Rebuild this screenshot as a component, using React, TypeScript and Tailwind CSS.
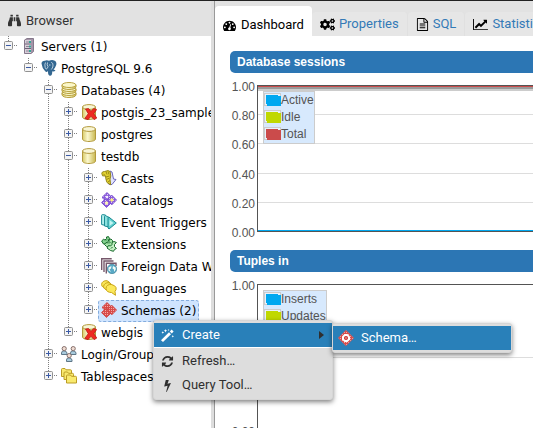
import type { ReactNode } from "react";
import { FaBinoculars, FaCogs } from "react-icons/fa";

const FA_PATHS = {
  tachometer:
    "M384 1152q0-53-37.5-90.5t-90.5-37.5-90.5 37.5-37.5 90.5 37.5 90.5 90.5 37.5 90.5-37.5 37.5-90.5zm192-448q0-53-37.5-90.5t-90.5-37.5-90.5 37.5-37.5 90.5 37.5 90.5 90.5 37.5 90.5-37.5 37.5-90.5zm428 481l101-382q6-26-7.5-48.5t-38.5-29.5-48 6.5-30 39.5l-101 382q-60 5-107 43.5t-63 98.5q-20 77 20 146t117 89 146-20 89-117q16-60-6-117t-72-91zm660-33q0-53-37.5-90.5t-90.5-37.5-90.5 37.5-37.5 90.5 37.5 90.5 90.5 37.5 90.5-37.5 37.5-90.5zm-640-640q0-53-37.5-90.5t-90.5-37.5-90.5 37.5-37.5 90.5 37.5 90.5 90.5 37.5 90.5-37.5 37.5-90.5zm448 192q0-53-37.5-90.5t-90.5-37.5-90.5 37.5-37.5 90.5 37.5 90.5 90.5 37.5 90.5-37.5 37.5-90.5zm320 448q0 261-141 483-19 29-54 29h-1402q-35 0-54-29-141-221-141-483 0-182 71-348t191-286 286-191 348-71 348 71 286 191 191 286 71 348z",
  file:
    "M1596 380q28 28 48 76t20 88v1152q0 40-28 68t-68 28h-1344q-40 0-68-28t-28-68v-1600q0-40 28-68t68-28h896q40 0 88 20t76 48zm-444-244v376h376q-10-29-22-41l-313-313q-12-12-41-22zm384 1528v-1024h-416q-40 0-68-28t-28-68v-416h-768v1536h1280zm-1024-864q0-14 9-23t23-9h704q14 0 23 9t9 23v64q0 14-9 23t-23 9h-704q-14 0-23-9t-9-23v-64zm736 224q14 0 23 9t9 23v64q0 14-9 23t-23 9h-704q-14 0-23-9t-9-23v-64q0-14 9-23t23-9h704zm0 256q14 0 23 9t9 23v64q0 14-9 23t-23 9h-704q-14 0-23-9t-9-23v-64q0-14 9-23t23-9h704z",
  chart:
    "M2048 1536v128h-2048v-1536h128v1408h1920zm-128-1248v435q0 21-19.5 29.5t-35.5-7.5l-121-121-633 633q-10 10-23 10t-23-10l-233-233-416 416-192-192 585-585q10-10 23-10t23 10l233 233 464-464-121-121q-16-16-7.5-35.5t29.5-19.5h435q14 0 23 9t9 23z",
  refresh:
    "M1639 1056q0 5-1 7-64 268-268 434.5t-478 166.5q-146 0-282.5-55t-243.5-157l-129 129q-19 19-45 19t-45-19-19-45v-448q0-26 19-45t45-19h448q26 0 45 19t19 45-19 45l-137 137q71 66 161 102t187 36q134 0 250-65t186-179q11-17 53-117 8-23 30-23h192q13 0 22.5 9.5t9.5 22.5zm25-800v448q0 26-19 45t-45 19h-448q-26 0-45-19t-19-45 19-45l138-138q-148-137-349-137-134 0-250 65t-186 179q-11 17-53 117-8 23-30 23h-199q-13 0-22.5-9.5t-9.5-22.5v-7q65-268 270-434.5t480-166.5q146 0 284 55.5t245 156.5l130-129q19-19 45-19t45 19 19 45z",
  bolt:
    "M1333 566q18 20 7 44l-540 1157q-13 25-42 25-4 0-14-2-17-5-25.5-19t-4.5-30l197-808-406 101q-4 1-12 1-18 0-31-11-18-15-13-39l201-825q4-16 18-27t32-11h328q19 0 32 12.5t13 29.5q0 8-5 18l-171 463 396-98q8-2 12-2 19 0 34 15z",
};

const Glyph = ({
  name,
  size = 13,
  box = 1792,
}: {
  name: keyof typeof FA_PATHS;
  size?: number;
  box?: number;
}) => (
  <svg
    width={Math.round((size * box) / 1792)}
    height={size}
    viewBox={`0 0 ${box} 1792`}
    fill="currentColor"
  >
    <path d={FA_PATHS[name]} />
  </svg>
);

const MagicWand = () => (
  <svg width="13" height="13" viewBox="0 0 13 13" fill="currentColor">
    <path d="M0 11.2 8 3.2 10 5.2 2 13Z" />
    <path d="M8.800 2.400 10.600.6 12.600 2.600 10.800 4.400Z" />
    <path d="M4.500 0 5 1.300 6.300 1.800 5 2.300 4.500 3.600 4 2.300 2.700 1.800 4 1.300ZM1.800 2.200l.4.9.9.4-.9.4-.4.9-.4-.9-.9-.4.9-.4ZM7.600 0l.3.7.7.3-.7.3-.3.7-.3-.7-.7-.3.7-.3ZM11.800 6l.4.9.8.4-.8.4-.4.9-.4-.9-.8-.4.8-.4Z" />
  </svg>
);

const Cylinder = () => (
  <>
    <path
      d="M1.500 3v10C1.500 14.500 4.500 15.500 8 15.500S14.500 14.500 14.500 13v-10Z"
      fill="url(#cyl)"
      stroke="#b39a3e"
    />
    <ellipse cx="8" cy="3" rx="6.500" ry="2.400" fill="#f8f5d4" stroke="#b39a3e" />
  </>
);

const Person = ({ x, y }: { x: number; y: number }) => (
  <g transform={`translate(${x} ${y})`} stroke="#5f7787">
    <path d="M.5 8.500V7Q.5 4.800 3 4.800T6 7v1.500Z" fill="#a9cbdd" />
    <circle cx="3.200" cy="2.600" r="2.100" fill="#f0dcd2" stroke="#86706c" />
  </g>
);

const ICONS: Record<string, ReactNode> = {
  servers: (
    <>
      <path d="M3.500 2 6 .5h6.500v13L10 15.500H3.500Z" fill="#a595a9" stroke="#85788b" />
      <path d="M4 2h6v13H4Z" fill="#d8d0da" />
      <path d="M4 6h6M4 10.500h6" stroke="#6f6177" />
      <path d="M5 4h3M5 8.500h3M5 13h3" stroke="#8d8193" />
      <path d="M8 3h2v2H8ZM8 7.500h2v2H8ZM8 12h2v2H8Z" fill="#35a596" />
    </>
  ),
  postgres: (
    <>
      <path
        d="M.5 3.500Q.8.600 3.800.7 6-.2 8 .8 11-.6 13.700.7 16 1.800 15.200 5 14.200 8 12.500 9.500L14.500 10.300Q13.300 12 11.200 11.300 11.400 15.800 9.200 15.800 6.800 15.800 7 11 5.500 12.800 4 11 1 8 .5 3.500Z"
        fill="#336791"
      />
      <path
        d="M4.500 2.500Q3.400 4.500 4.200 7.500 4.500 9.300 6 9M6.500 2.500Q5.600 5 7 6.500L6.300 8.500M10.200 2.300Q12.500 3 12 6 11.500 8.300 10.300 9.500M8 5h1.500"
        fill="none"
        stroke="#dce8f1"
        strokeWidth=".8"
      />
    </>
  ),
  databases: (
    <>
      {[11, 7, 3].map((y) => (
        <g key={y} stroke="#b9a241">
          <path d={`M1 ${y}v2Q2 ${y + 4.5} 8 ${y + 4.5}T15 ${y + 2}v-2Z`} fill="url(#cyl)" />
          <ellipse cx="8" cy={y} rx="7" ry="2.500" fill="#fbf7c8" />
        </g>
      ))}
    </>
  ),
  database: <Cylinder />,
  offline: (
    <>
      <Cylinder />
      <path
        d="M4.500 5 7.500 4.500 10 7.300 12.700 4.500 15.700 5.500 12.800 9.700 15.800 14 13.200 15.700 10 12.300 7 15.700 3.800 14.500 7.200 9.700Z"
        fill="#ee2a22"
        stroke="#b5120f"
        strokeWidth=".7"
      />
    </>
  ),
  casts: (
    <>
      <path d="M9 1 11 2 12.500 9 15 9.500 11 14.500 8 14.500Z" fill="#e2e4ff" stroke="#6a67bd" />
      <path
        d="M.8 3.200Q1 1.500 3.500 1.500L7 .6 9 1.500 9.800 6 9 9 9.600 14.800 6 12.500 5 9.500 4.500 6 1.500 5.800Z"
        fill="#e3d230"
        stroke="#94861a"
      />
      <path d="M2.500 3.800 4 5.500M5 1.500l1 3M7 1.500l1 3M5 7l3.500-1M5.500 9.500 8.500 8M7 12l2-1.500" stroke="#857813" strokeWidth=".8" />
    </>
  ),
  catalogs: (
    <>
      <g fill="url(#purplemesh)" stroke="#7546cf" strokeWidth=".9">
        <path d="M6 .6 11 5.400 6 10.200 1 5.400Z" />
        <path d="M5.500 5.800 10.500 10.600 5.500 15.400.5 10.600Z" />
        <path d="M10.800 3.200 15.500 8 10.800 12.800 6.200 8Z" />
      </g>
      <path d="M10.800 6 12.800 8 10.800 10 8.800 8Z" fill="#fbf27a" />
      <path d="M5.500 9 7.500 11 5.500 13 3.500 11Z" fill="#fff7b0" />
      <path d="M6 3.500 7.500 5 6 6.500 4.500 5Z" fill="#fff" />
    </>
  ),
  eventTriggers: (
    <g stroke="#1b8b93">
      <path d="M.6 1.500Q.6.6 1.600.6L4.500 1 4.500 11.500.6 10.500Z" fill="#b4efed" />
      <path d="M3.500 2.500Q3.500 1.600 4.500 1.600L9 4 8 13 3.500 12Z" fill="#8ae2df" />
      <path d="M7 4Q7 2.800 8 3.200L15.300 9 8 15 7 14Z" fill="#5fd0cf" />
      <path d="M8.500 6v6l4-3Z" fill="#c4f5f2" stroke="none" />
    </g>
  ),
  extensions: (
    <g fill="#84d28f" stroke="#17692b">
      <path d="M.6 5 2.500 3.300 4 4 5.500 2.500 5.500 1 7.500.6 8.500 2.500 7 5.500 4.500 8 2.500 8Z" />
      <path d="M3.500 8.500 5 6.500 6.500 7 8 5.500 8 3.500 10 3 11.500 4.500 12 8 8.500 11.500 5.500 10.500Z" fill="#a5e3a8" />
      <path d="M6 12 7.500 9.500 9.500 10 11 8.500 11 6.500 13 5.500 15.400 6.500 13.500 8.500 13.500 10.500 15.400 12.500 13.500 13.500 12.500 15.300 9.500 14.500Z" fill="#c2f0c2" />
      <path d="m5 4.500 1-1M8 7.500l1.500-1.500M10 12.500l1.500-1.500" />
    </g>
  ),
  foreign: (
    <>
      <path d="M.7 12V.7h10M3 14V3h9.500M5.300 15.500V5.300h9.700V8" fill="none" stroke="#76586b" strokeWidth="1.400" />
      <circle cx="11" cy="11" r="4.700" fill="#58a9c6" stroke="#3e8198" strokeWidth=".7" />
      <path d="M7.500 9.500 10.500 8l-.5 2.500L8.500 11.500 10 14 7.500 12.500ZM12 8l2.700 1.500v2L13 14v-2.500l-1.500-1Z" fill="#f4fbf6" />
    </>
  ),
  languages: (
    <g fill="#fbe85a" stroke="#c8a416">
      <path d="M6 .7C3 .4.600 2 .6 4.500S3 8 5 8l3 2V8Q10 6 9.500 4T6 .7Z" />
      <path d="M8 2.700C5 2.400 2.600 4 2.600 6.500S5 10 7 10l3 2V10Q12 8 11.500 6T8 2.700Z" />
      <path d="M10.500 4.500C7.500 4.200 5 5.500 5 8.500S8 12.500 10.500 12.500l4 2.800-.5-3.800Q15.700 9.500 15 7.500T10.500 4.500Z" />
    </g>
  ),
  schemas: (
    <g fill="url(#redmesh)" stroke="#cf4240" strokeWidth=".9">
      <path d="M6 .6 11 5.400 6 10.200 1 5.400Z" />
      <path d="M5.500 5.800 10.500 10.600 5.500 15.400.5 10.600Z" />
      <path d="M10.800 3.200 15.500 8 10.800 12.800 6.200 8Z" />
    </g>
  ),
  schema: (
    <>
      <path d="M8 .3 15.700 8 8 15.700.3 8Z" fill="url(#redmesh)" stroke="#e05a58" strokeWidth=".6" />
      <path d="M6.500 4h3L12 6.500v3L9.500 12h-3L4 9.500v-3Z" fill="#fff" />
      <circle cx="8" cy="8" r="1.500" fill="#e98886" stroke="#c83634" strokeWidth="1.100" />
    </>
  ),
  roles: (
    <>
      <Person x={0} y={0} />
      <Person x={9} y={0} />
      <Person x={5} y={7} />
    </>
  ),
  tablespaces: (
    <g fill="#f9ea6e" stroke="#bb9c25">
      <path d="M.5 8.500V1.500q0-1 1-1h2.500l1 1.300H9.500q1 0 1 1v5.700Z" />
      <path d="M3 11.500V5q0-1 1-1h2.500l1 1.300h4q1 0 1 1v5.200Z" />
      <path d="M5.500 15V8q0-1 1-1h3l1 1.300h4q1 0 1 1V15Z" />
    </g>
  ),
};

const NodeIcon = ({ name }: { name: string }) => (
  <svg width="16" height="16" viewBox="0 0 16 16" className="shrink-0">
    {ICONS[name]}
  </svg>
);

type TreeNode = {
  label: string;
  icon: string;
  level: number;
  open?: boolean;
  last?: boolean;
  selected?: boolean;
};

const TREE: TreeNode[] = [
  { label: "Servers (1)", icon: "servers", level: 0, open: true, last: true },
  { label: "PostgreSQL 9.6", icon: "postgres", level: 1, open: true, last: true },
  { label: "Databases (4)", icon: "databases", level: 2, open: true },
  { label: "postgis_23_sample", icon: "offline", level: 3 },
  { label: "postgres", icon: "database", level: 3 },
  { label: "testdb", icon: "database", level: 3, open: true },
  { label: "Casts", icon: "casts", level: 4 },
  { label: "Catalogs", icon: "catalogs", level: 4 },
  { label: "Event Triggers", icon: "eventTriggers", level: 4 },
  { label: "Extensions", icon: "extensions", level: 4 },
  { label: "Foreign Data W", icon: "foreign", level: 4 },
  { label: "Languages", icon: "languages", level: 4 },
  { label: "Schemas (2)", icon: "schemas", level: 4, last: true, selected: true },
  { label: "webgis", icon: "offline", level: 3, last: true },
  { label: "Login/Group", icon: "roles", level: 2 },
  { label: "Tablespaces", icon: "tablespaces", level: 2, last: true },
];

const DOTS = { stroke: "#808080", strokeDasharray: "1 1" };

// Servers and PostgreSQL have no siblings, so no line runs below them
const Guide = ({ line }: { line: boolean }) => (
  <svg width="20" height="22" className="shrink-0">
    {line && <line x1="8.500" y1="0" x2="8.500" y2="22" {...DOTS} />}
  </svg>
);

const Toggle = ({ node }: { node: TreeNode }) => (
  <button
    type="button"
    aria-label={`${node.open ? "Collapse" : "Expand"} ${node.label}`}
    className="h-[22px] w-[18px] shrink-0"
  >
    <svg width="18" height="22">
      <line x1="8.500" y1="0" x2="8.500" y2={node.last ? 10 : 22} {...DOTS} />
      <line x1="14" y1="9.500" x2="18" y2="9.500" {...DOTS} />
      <rect x="4.500" y="5.500" width="8" height="8" rx="1" fill="#f4f4f4" stroke="#919191" />
      <path d={node.open ? "M6 9.500h5" : "M6 9.500h5M8.500 7v5"} stroke="#3b5aa5" />
    </svg>
  </button>
);

const BrowserTree = () => (
  <ul
    role="tree"
    className="overflow-hidden bg-white font-['DejaVu_Sans',Verdana,sans-serif] text-[12px] leading-[18px] text-black"
  >
    {TREE.map((node) => (
      <li key={node.label} role="treeitem" aria-selected={!!node.selected} className="flex h-[22px]">
        {Array.from({ length: node.level }, (_, i) => (
          <Guide key={i} line={i === 2 ? true : i === 3} />
        ))}
        <Toggle node={node} />
        <span
          className={
            node.selected
              ? "flex items-start gap-1 rounded-[3px] border border-dashed border-[#84acdd] bg-[#cfe4fe] px-0.5 pt-px whitespace-nowrap"
              : "flex items-start gap-1 border border-transparent px-0.5 pt-px whitespace-nowrap"
          }
        >
          <NodeIcon name={node.icon} />
          {node.label}
        </span>
      </li>
    ))}
  </ul>
);

const TABS = [
  { label: "Properties", icon: <FaCogs size={15} /> },
  { label: "SQL", icon: <Glyph name="file" /> },
  { label: "Statistics", icon: <Glyph name="chart" box={2048} /> },
];

const TabBar = () => (
  <nav className="flex h-[35px] items-end overflow-hidden bg-[#e2e2e2] text-[13px]">
    <button
      type="button"
      className="flex h-[30px] shrink-0 items-center gap-[5px] rounded-t-[4px] bg-white px-2 pt-2 text-black"
    >
      <Glyph name="tachometer" />
      Dashboard
    </button>
    {TABS.map((tab) => (
      <button
        key={tab.label}
        type="button"
        className="flex h-6 shrink-0 items-center gap-1 rounded-t-[4px] border-r border-[#e0e0e0] bg-[#e6e6e6] px-2 text-[#337ab7]"
      >
        <span className="text-black">{tab.icon}</span>
        {tab.label}
      </button>
    ))}
  </nav>
);

type Series = { name: string; color: string };

const Legend = ({ series }: { series: Series[] }) => (
  <ul className="absolute top-[18px] left-[33px] border border-[#ccc] bg-[#d7e9fd] text-[12px] leading-[17px] text-[#545454]">
    {series.map(({ name, color }) => (
      <li key={name} className="flex items-center">
        <svg width="17" height="17" className="shrink-0">
          <rect x="0.500" y="1.500" width="16" height="12" fill="#e8f1fb" stroke="#ccc" />
          <path d="M2 3h12v1h3v10H3v-2H2Z" fill={color} />
        </svg>
        {name}
      </li>
    ))}
  </ul>
);

const Chart = ({
  title,
  ticks,
  series,
  sessions,
}: {
  title: string;
  ticks: string[];
  series: Series[];
  sessions?: boolean;
}) => (
  <section>
    <h2 className="h-[22px] rounded-l-[5px] bg-[#2c76b4] pl-[7px] text-[12px] leading-[22px] font-bold text-white">
      {title}
    </h2>
    <div className="relative pt-2">
      <svg width="100%" height="169" className="block" fontSize="12" fill="#545454">
        {ticks.map((tick, i) => {
          const y = 4 + Math.round((146 * i) / (ticks.length - 1));
          return (
            <g key={i}>
              <line x1="28" y1={y + 0.5} x2="100%" y2={y + 0.5} stroke="#ddd" />
              <text x="25" y={y + 6} textAnchor="end">
                {tick}
              </text>
            </g>
          );
        })}
        {sessions && (
          <>
            <rect x="28" y="6" width="100%" height="2" fill="#999" />
            <rect x="28" y="8" width="100%" height="2" fill="#ccc" />
            <rect x="28" y="5" width="100%" height="1" fill="#cb4b4b" />
            <rect x="28" y="149" width="100%" height="1" fill="#00a8f0" />
          </>
        )}
        <path d="M27.500 4v147" stroke="#545454" />
        <rect x="27" y="4" width="100%" height="1" />
        <rect x="27" y="150" width="100%" height="1" />
      </svg>
      <Legend series={series} />
    </div>
  </section>
);

const Dashboard = () => (
  <div className="flex-1 overflow-hidden bg-white pt-[15px] pl-[15px] font-['Liberation_Sans',Arial,sans-serif]">
    <Chart
      title="Database sessions"
      ticks={["1.00", "0.80", "0.60", "0.40", "0.20", "0.00"]}
      sessions
      series={[
        { name: "Active", color: "#00a8f0" },
        { name: "Idle", color: "#c0d800" },
        { name: "Total", color: "#cb4b4b" },
      ]}
    />
    <Chart
      title="Tuples in"
      ticks={["1.00", "", "0.00"]}
      series={[
        { name: "Inserts", color: "#00a8f0" },
        { name: "Updates", color: "#c0d800" },
      ]}
    />
  </div>
);

const MENU_BOX =
  "absolute w-[180px] rounded-[3px] border border-[#d6d6d6] bg-[#ddd] py-0.5 shadow-[0_2px_5px_rgba(0,0,0,0.5)]";

const MenuItem = ({
  icon,
  label,
  active,
}: {
  icon: ReactNode;
  label: string;
  active?: boolean;
}) => (
  <button
    type="button"
    role="menuitem"
    className={
      active
        ? "flex h-6 w-full items-center gap-[7px] bg-[#2980b9] pl-[5px] text-white"
        : "flex h-6 w-full items-center gap-[7px] pl-[5px] text-[#2f2f2f]"
    }
  >
    <span className="flex w-4 justify-center">{icon}</span>
    {label}
  </button>
);

const ContextMenu = () => (
  <div role="menu" className={`${MENU_BOX} top-[319px] left-[153px] text-[13px]`}>
    <div className="relative mb-px border-b border-white">
      <MenuItem icon={<MagicWand />} label="Create" active />
      <svg width="5" height="8" className="absolute top-2 right-2">
        <path d="M0 0 5 4 0 8Z" fill="#2f2f2f" />
      </svg>
      <div role="menu" className={`${MENU_BOX} top-0 left-[178px]`}>
        <MenuItem icon={<NodeIcon name="schema" />} label="Schema…" active />
      </div>
    </div>
    <MenuItem icon={<Glyph name="refresh" />} label="Refresh…" />
    <MenuItem icon={<Glyph name="bolt" />} label="Query Tool…" />
  </div>
);

const App = () => (
  <main className="relative flex h-screen overflow-hidden border-t border-[#222] bg-white font-[Roboto,sans-serif]">
    <svg width="0" height="0" className="absolute">
      <defs>
        <linearGradient id="cyl">
          <stop offset="0" stopColor="#d8cb68" />
          <stop offset=".4" stopColor="#fbf8cf" />
          <stop offset="1" stopColor="#c9b850" />
        </linearGradient>
        <pattern id="redmesh" width="2" height="2" patternUnits="userSpaceOnUse">
          <rect width="2" height="2" fill="#d94c4a" />
          <rect width="1" height="1" fill="#f0aaa8" />
        </pattern>
        <pattern id="purplemesh" width="2" height="2" patternUnits="userSpaceOnUse">
          <rect width="2" height="2" fill="#8a5cdb" />
          <rect width="1" height="1" fill="#d9c8f6" />
        </pattern>
      </defs>
    </svg>

    <aside className="w-[211px] shrink-0">
      <h1 className="flex h-[35px] items-center gap-[5px] bg-[#e2e2e2] pt-1 pl-2 text-[13px] text-[#333]">
        <FaBinoculars size={13} />
        Browser
      </h1>
      <BrowserTree />
    </aside>

    <div className="w-1 shrink-0 border-r border-[#999] bg-[#ddd]" />

    <div className="flex min-w-0 flex-1 flex-col">
      <TabBar />
      <Dashboard />
    </div>

    <ContextMenu />
  </main>
);

export default App;
